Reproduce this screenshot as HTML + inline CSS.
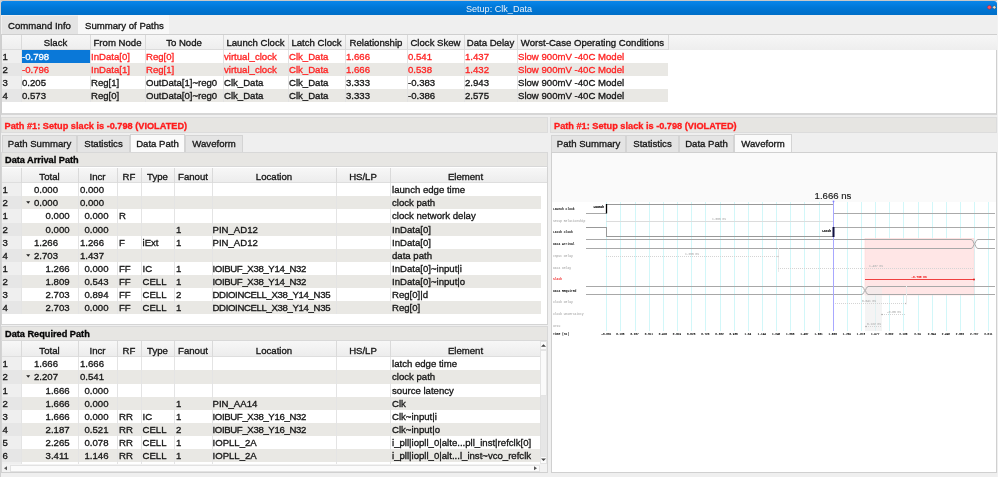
<!DOCTYPE html><html><head><meta charset="utf-8"><style>
*{margin:0;padding:0;box-sizing:border-box}
html,body{width:998px;height:477px;overflow:hidden;background:#eeeeee;font-family:"Liberation Sans",sans-serif;font-size:9.6px;color:#161616}
div{position:absolute}
.t{white-space:nowrap;-webkit-text-stroke:0.32px currentColor}
.b{font-weight:bold}
.r{color:#ff2424}
</style></head><body><div id="root" style="left:0;top:0;width:998px;height:477px;will-change:transform"><div style="left:0px;top:0px;width:998px;height:477px;background:#efefef"></div>
<div style="left:0px;top:0px;width:998px;height:1px;background:#c8c8c8"></div>
<div style="left:0px;top:0px;width:1px;height:477px;background:#d0d0d0"></div>
<div style="left:997px;top:0px;width:1px;height:477px;background:#f2f2f2"></div>
<div style="left:1px;top:1px;width:996px;height:14px;background:linear-gradient(#0a86ea,#0078d8 45%,#006fc8);border-radius:2px 3px 0 0"></div>
<div class="t" style="left:1px;top:1.5px;width:996px;text-align:center;height:14px;line-height:14px;color:#e8f0f8;font-size:9.1px;-webkit-text-stroke:0">Setup: Clk_Data</div>
<svg style="position:absolute;left:985px;top:3px" width="12" height="9" viewBox="985 3 12 9"><circle cx="989.4" cy="7.3" r="1.9" fill="#ff5060" stroke="#a02838" stroke-width="0.5"/><path d="M994.3 5.4L996.2 7.3L994.3 9.2L992.4 7.3Z" fill="#e8dcc8" stroke="#403828" stroke-width="0.35"/></svg>
<div style="left:1px;top:15px;width:996px;height:20px;background:#efefef"></div>
<div style="left:2px;top:16px;width:76px;height:18px;background:#e4e4e4"></div>
<div class="t" style="left:8px;top:17px;height:17px;line-height:17px;">Command Info</div>
<div style="left:78px;top:15px;width:91px;height:20px;background:#f8f8f8"></div>
<div class="t" style="left:85px;top:17px;height:17px;line-height:17px;">Summary of Paths</div>
<div style="left:1px;top:34px;width:996px;height:81px;background:#fff;border:1px solid #cfcfcf;border-bottom:2px solid #d6d6d6"></div>
<div style="left:2px;top:35px;width:995px;height:15px;background:linear-gradient(#f6f6f6,#eeeeee)"></div>
<div style="left:2px;top:49px;width:666px;height:1px;background:#dcdcdc"></div>
<div style="left:21px;top:35px;width:1px;height:15px;background:#dadada"></div>
<div class="t" style="left:21px;top:36px;width:69px;text-align:center;height:14px;line-height:14px;">Slack</div>
<div style="left:90px;top:35px;width:1px;height:15px;background:#dadada"></div>
<div class="t" style="left:90px;top:36px;width:55px;text-align:center;height:14px;line-height:14px;">From Node</div>
<div style="left:145px;top:35px;width:1px;height:15px;background:#dadada"></div>
<div class="t" style="left:145px;top:36px;width:78px;text-align:center;height:14px;line-height:14px;">To Node</div>
<div style="left:223px;top:35px;width:1px;height:15px;background:#dadada"></div>
<div class="t" style="left:223px;top:36px;width:65px;text-align:center;height:14px;line-height:14px;">Launch Clock</div>
<div style="left:288px;top:35px;width:1px;height:15px;background:#dadada"></div>
<div class="t" style="left:288px;top:36px;width:57px;text-align:center;height:14px;line-height:14px;">Latch Clock</div>
<div style="left:345px;top:35px;width:1px;height:15px;background:#dadada"></div>
<div class="t" style="left:345px;top:36px;width:62px;text-align:center;height:14px;line-height:14px;">Relationship</div>
<div style="left:407px;top:35px;width:1px;height:15px;background:#dadada"></div>
<div class="t" style="left:407px;top:36px;width:57px;text-align:center;height:14px;line-height:14px;">Clock Skew</div>
<div style="left:464px;top:35px;width:1px;height:15px;background:#dadada"></div>
<div class="t" style="left:464px;top:36px;width:53px;text-align:center;height:14px;line-height:14px;">Data Delay</div>
<div style="left:517px;top:35px;width:1px;height:15px;background:#dadada"></div>
<div class="t" style="left:517px;top:36px;width:151px;text-align:center;height:14px;line-height:14px;">Worst-Case Operating Conditions</div>
<div style="left:668px;top:35px;width:1px;height:15px;background:#dadada"></div>
<div style="left:2px;top:50px;width:666px;height:13px;background:#ffffff"></div>
<div style="left:2px;top:50px;width:19px;height:13px;background:#efefef"></div>
<div class="t" style="left:2.5px;top:50.0px;height:13px;line-height:13px;">1</div>
<div style="left:21px;top:50px;width:69px;height:13px;background:#0a78d8"></div>
<div class="t" style="left:22px;top:50.0px;height:13px;line-height:13px;color:#fff">-0.798</div>
<div class="t" style="left:91px;top:50.0px;height:13px;line-height:13px;color:#ff2424">InData[0]</div>
<div class="t" style="left:146px;top:50.0px;height:13px;line-height:13px;color:#ff2424">Reg[0]</div>
<div class="t" style="left:224px;top:50.0px;height:13px;line-height:13px;color:#ff2424">virtual_clock</div>
<div class="t" style="left:289px;top:50.0px;height:13px;line-height:13px;color:#ff2424">Clk_Data</div>
<div class="t" style="left:346px;top:50.0px;height:13px;line-height:13px;color:#ff2424">1.666</div>
<div class="t" style="left:408px;top:50.0px;height:13px;line-height:13px;color:#ff2424">0.541</div>
<div class="t" style="left:465px;top:50.0px;height:13px;line-height:13px;color:#ff2424">1.437</div>
<div class="t" style="left:518px;top:50.0px;height:13px;line-height:13px;color:#ff2424">Slow 900mV -40C Model</div>
<div style="left:21px;top:50px;width:1px;height:13px;background:#e2e2e2"></div>
<div style="left:90px;top:50px;width:1px;height:13px;background:#e2e2e2"></div>
<div style="left:145px;top:50px;width:1px;height:13px;background:#e2e2e2"></div>
<div style="left:223px;top:50px;width:1px;height:13px;background:#e2e2e2"></div>
<div style="left:288px;top:50px;width:1px;height:13px;background:#e2e2e2"></div>
<div style="left:345px;top:50px;width:1px;height:13px;background:#e2e2e2"></div>
<div style="left:407px;top:50px;width:1px;height:13px;background:#e2e2e2"></div>
<div style="left:464px;top:50px;width:1px;height:13px;background:#e2e2e2"></div>
<div style="left:517px;top:50px;width:1px;height:13px;background:#e2e2e2"></div>
<div style="left:2px;top:63px;width:666px;height:13px;background:#e9e8e4"></div>
<div style="left:2px;top:63px;width:19px;height:13px;background:#e6e6e6"></div>
<div class="t" style="left:2.5px;top:63.13px;height:13px;line-height:13px;">2</div>
<div class="t" style="left:22px;top:63.13px;height:13px;line-height:13px;color:#ff2424">-0.796</div>
<div class="t" style="left:91px;top:63.13px;height:13px;line-height:13px;color:#ff2424">InData[1]</div>
<div class="t" style="left:146px;top:63.13px;height:13px;line-height:13px;color:#ff2424">Reg[1]</div>
<div class="t" style="left:224px;top:63.13px;height:13px;line-height:13px;color:#ff2424">virtual_clock</div>
<div class="t" style="left:289px;top:63.13px;height:13px;line-height:13px;color:#ff2424">Clk_Data</div>
<div class="t" style="left:346px;top:63.13px;height:13px;line-height:13px;color:#ff2424">1.666</div>
<div class="t" style="left:408px;top:63.13px;height:13px;line-height:13px;color:#ff2424">0.538</div>
<div class="t" style="left:465px;top:63.13px;height:13px;line-height:13px;color:#ff2424">1.432</div>
<div class="t" style="left:518px;top:63.13px;height:13px;line-height:13px;color:#ff2424">Slow 900mV -40C Model</div>
<div style="left:21px;top:63px;width:1px;height:13px;background:#e2e2e2"></div>
<div style="left:90px;top:63px;width:1px;height:13px;background:#e2e2e2"></div>
<div style="left:145px;top:63px;width:1px;height:13px;background:#e2e2e2"></div>
<div style="left:223px;top:63px;width:1px;height:13px;background:#e2e2e2"></div>
<div style="left:288px;top:63px;width:1px;height:13px;background:#e2e2e2"></div>
<div style="left:345px;top:63px;width:1px;height:13px;background:#e2e2e2"></div>
<div style="left:407px;top:63px;width:1px;height:13px;background:#e2e2e2"></div>
<div style="left:464px;top:63px;width:1px;height:13px;background:#e2e2e2"></div>
<div style="left:517px;top:63px;width:1px;height:13px;background:#e2e2e2"></div>
<div style="left:2px;top:76px;width:666px;height:13px;background:#ffffff"></div>
<div style="left:2px;top:76px;width:19px;height:13px;background:#efefef"></div>
<div class="t" style="left:2.5px;top:76.26px;height:13px;line-height:13px;">3</div>
<div class="t" style="left:22px;top:76.26px;height:13px;line-height:13px;">0.205</div>
<div class="t" style="left:91px;top:76.26px;height:13px;line-height:13px;">Reg[1]</div>
<div class="t" style="left:146px;top:76.26px;height:13px;line-height:13px;">OutData[1]~reg0</div>
<div class="t" style="left:224px;top:76.26px;height:13px;line-height:13px;">Clk_Data</div>
<div class="t" style="left:289px;top:76.26px;height:13px;line-height:13px;">Clk_Data</div>
<div class="t" style="left:346px;top:76.26px;height:13px;line-height:13px;">3.333</div>
<div class="t" style="left:408px;top:76.26px;height:13px;line-height:13px;">-0.383</div>
<div class="t" style="left:465px;top:76.26px;height:13px;line-height:13px;">2.943</div>
<div class="t" style="left:518px;top:76.26px;height:13px;line-height:13px;">Slow 900mV -40C Model</div>
<div style="left:21px;top:76px;width:1px;height:13px;background:#e2e2e2"></div>
<div style="left:90px;top:76px;width:1px;height:13px;background:#e2e2e2"></div>
<div style="left:145px;top:76px;width:1px;height:13px;background:#e2e2e2"></div>
<div style="left:223px;top:76px;width:1px;height:13px;background:#e2e2e2"></div>
<div style="left:288px;top:76px;width:1px;height:13px;background:#e2e2e2"></div>
<div style="left:345px;top:76px;width:1px;height:13px;background:#e2e2e2"></div>
<div style="left:407px;top:76px;width:1px;height:13px;background:#e2e2e2"></div>
<div style="left:464px;top:76px;width:1px;height:13px;background:#e2e2e2"></div>
<div style="left:517px;top:76px;width:1px;height:13px;background:#e2e2e2"></div>
<div style="left:2px;top:89px;width:666px;height:13px;background:#e9e8e4"></div>
<div style="left:2px;top:89px;width:19px;height:13px;background:#e6e6e6"></div>
<div class="t" style="left:2.5px;top:89.39px;height:13px;line-height:13px;">4</div>
<div class="t" style="left:22px;top:89.39px;height:13px;line-height:13px;">0.573</div>
<div class="t" style="left:91px;top:89.39px;height:13px;line-height:13px;">Reg[0]</div>
<div class="t" style="left:146px;top:89.39px;height:13px;line-height:13px;">OutData[0]~reg0</div>
<div class="t" style="left:224px;top:89.39px;height:13px;line-height:13px;">Clk_Data</div>
<div class="t" style="left:289px;top:89.39px;height:13px;line-height:13px;">Clk_Data</div>
<div class="t" style="left:346px;top:89.39px;height:13px;line-height:13px;">3.333</div>
<div class="t" style="left:408px;top:89.39px;height:13px;line-height:13px;">-0.386</div>
<div class="t" style="left:465px;top:89.39px;height:13px;line-height:13px;">2.575</div>
<div class="t" style="left:518px;top:89.39px;height:13px;line-height:13px;">Slow 900mV -40C Model</div>
<div style="left:21px;top:89px;width:1px;height:13px;background:#e2e2e2"></div>
<div style="left:90px;top:89px;width:1px;height:13px;background:#e2e2e2"></div>
<div style="left:145px;top:89px;width:1px;height:13px;background:#e2e2e2"></div>
<div style="left:223px;top:89px;width:1px;height:13px;background:#e2e2e2"></div>
<div style="left:288px;top:89px;width:1px;height:13px;background:#e2e2e2"></div>
<div style="left:345px;top:89px;width:1px;height:13px;background:#e2e2e2"></div>
<div style="left:407px;top:89px;width:1px;height:13px;background:#e2e2e2"></div>
<div style="left:464px;top:89px;width:1px;height:13px;background:#e2e2e2"></div>
<div style="left:517px;top:89px;width:1px;height:13px;background:#e2e2e2"></div>
<div style="left:1px;top:117px;width:547px;height:356px;background:#efefef"></div>
<div style="left:1px;top:117px;width:547px;height:16px;background:#e6e5e2;border:1px solid #dcdcdc"></div>
<div class="t" style="left:4.5px;top:118.5px;height:15px;line-height:15px;font-weight:bold;color:#ff1c1c;font-size:9.2px">Path #1: Setup slack is -0.798 (VIOLATED)</div>
<div style="left:2px;top:135px;width:75px;height:17px;background:#e4e4e4;border:1px solid #d4d4d4;border-bottom:none"></div>
<div class="t" style="left:2px;top:135px;width:75px;text-align:center;height:17px;line-height:17px;">Path Summary</div>
<div style="left:77px;top:135px;width:53px;height:17px;background:#e4e4e4;border:1px solid #d4d4d4;border-bottom:none"></div>
<div class="t" style="left:77px;top:135px;width:53px;text-align:center;height:17px;line-height:17px;">Statistics</div>
<div style="left:130px;top:134px;width:55px;height:19px;background:#fafafa;border:1px solid #d4d4d4;border-bottom:none"></div>
<div class="t" style="left:130px;top:135px;width:55px;text-align:center;height:17px;line-height:17px;">Data Path</div>
<div style="left:185px;top:135px;width:58px;height:17px;background:#e4e4e4;border:1px solid #d4d4d4;border-bottom:none"></div>
<div class="t" style="left:185px;top:135px;width:58px;text-align:center;height:17px;line-height:17px;">Waveform</div>
<div style="left:1px;top:152px;width:547px;height:15px;background:#e7e6e3;border:1px solid #d8d8d8"></div>
<div class="t" style="left:5px;top:153px;height:15px;line-height:15px;font-weight:bold;font-size:9.2px;color:#050505">Data Arrival Path</div>
<div style="left:1px;top:167px;width:547px;height:158px;background:#fff;border:1px solid #d4d4d4;border-top:none"></div>
<div style="left:2px;top:168px;width:545px;height:156px;background:#fff"></div>
<div style="left:2px;top:168px;width:545px;height:15px;background:linear-gradient(#f7f7f7,#ececec)"></div>
<div style="left:2px;top:182px;width:545px;height:1px;background:#dedede"></div>
<div style="left:21px;top:168px;width:1px;height:15px;background:#dadada"></div>
<div class="t" style="left:21px;top:170px;width:57px;text-align:center;height:14px;line-height:14px;">Total</div>
<div style="left:78px;top:168px;width:1px;height:15px;background:#dadada"></div>
<div class="t" style="left:78px;top:170px;width:39px;text-align:center;height:14px;line-height:14px;">Incr</div>
<div style="left:117px;top:168px;width:1px;height:15px;background:#dadada"></div>
<div class="t" style="left:117px;top:170px;width:24px;text-align:center;height:14px;line-height:14px;">RF</div>
<div style="left:141px;top:168px;width:1px;height:15px;background:#dadada"></div>
<div class="t" style="left:141px;top:170px;width:33px;text-align:center;height:14px;line-height:14px;">Type</div>
<div style="left:174px;top:168px;width:1px;height:15px;background:#dadada"></div>
<div class="t" style="left:174px;top:170px;width:38px;text-align:center;height:14px;line-height:14px;">Fanout</div>
<div style="left:212px;top:168px;width:1px;height:15px;background:#dadada"></div>
<div class="t" style="left:212px;top:170px;width:124px;text-align:center;height:14px;line-height:14px;">Location</div>
<div style="left:336px;top:168px;width:1px;height:15px;background:#dadada"></div>
<div class="t" style="left:336px;top:170px;width:54px;text-align:center;height:14px;line-height:14px;">HS/LP</div>
<div style="left:390px;top:168px;width:1px;height:15px;background:#dadada"></div>
<div class="t" style="left:390px;top:170px;width:151px;text-align:center;height:14px;line-height:14px;">Element</div>
<div style="left:2px;top:183px;width:539px;height:13px;background:#ffffff"></div>
<div style="left:2px;top:183px;width:19px;height:13px;background:#efefef"></div>
<div class="t" style="left:2.5px;top:183.2px;height:13px;line-height:13px;">1</div>
<div class="t" style="left:34px;top:183.2px;height:13px;line-height:13px;">0.000</div>
<div class="t" style="left:80px;top:183.2px;height:13px;line-height:13px;">0.000</div>
<div class="t" style="left:119px;top:183.2px;height:13px;line-height:13px;"></div>
<div class="t" style="left:142.5px;top:183.2px;height:13px;line-height:13px;"></div>
<div class="t" style="left:176px;top:183.2px;height:13px;line-height:13px;"></div>
<div class="t" style="left:212.5px;top:183.2px;height:13px;line-height:13px;"></div>
<div class="t" style="left:392px;top:183.2px;height:13px;line-height:13px;">launch edge time</div>
<div style="left:21px;top:183px;width:1px;height:13px;background:#e4e4e4"></div>
<div style="left:78px;top:183px;width:1px;height:13px;background:#e4e4e4"></div>
<div style="left:117px;top:183px;width:1px;height:13px;background:#e4e4e4"></div>
<div style="left:141px;top:183px;width:1px;height:13px;background:#e4e4e4"></div>
<div style="left:174px;top:183px;width:1px;height:13px;background:#e4e4e4"></div>
<div style="left:212px;top:183px;width:1px;height:13px;background:#e4e4e4"></div>
<div style="left:336px;top:183px;width:1px;height:13px;background:#e4e4e4"></div>
<div style="left:390px;top:183px;width:1px;height:13px;background:#e4e4e4"></div>
<div style="left:2px;top:196px;width:539px;height:13px;background:#e9e8e4"></div>
<div style="left:2px;top:196px;width:19px;height:13px;background:#e6e6e6"></div>
<div class="t" style="left:2.5px;top:196.32999999999998px;height:13px;line-height:13px;">2</div>
<svg style="position:absolute;left:26px;top:201px" width="5" height="3"><path d="M0.2 0.3H4.2L2.2 2.8Z" fill="#222"/></svg>
<div class="t" style="left:34px;top:196.32999999999998px;height:13px;line-height:13px;">0.000</div>
<div class="t" style="left:80px;top:196.32999999999998px;height:13px;line-height:13px;">0.000</div>
<div class="t" style="left:119px;top:196.32999999999998px;height:13px;line-height:13px;"></div>
<div class="t" style="left:142.5px;top:196.32999999999998px;height:13px;line-height:13px;"></div>
<div class="t" style="left:176px;top:196.32999999999998px;height:13px;line-height:13px;"></div>
<div class="t" style="left:212.5px;top:196.32999999999998px;height:13px;line-height:13px;"></div>
<div class="t" style="left:392px;top:196.32999999999998px;height:13px;line-height:13px;">clock path</div>
<div style="left:21px;top:196px;width:1px;height:13px;background:#e4e4e4"></div>
<div style="left:78px;top:196px;width:1px;height:13px;background:#e4e4e4"></div>
<div style="left:117px;top:196px;width:1px;height:13px;background:#e4e4e4"></div>
<div style="left:141px;top:196px;width:1px;height:13px;background:#e4e4e4"></div>
<div style="left:174px;top:196px;width:1px;height:13px;background:#e4e4e4"></div>
<div style="left:212px;top:196px;width:1px;height:13px;background:#e4e4e4"></div>
<div style="left:336px;top:196px;width:1px;height:13px;background:#e4e4e4"></div>
<div style="left:390px;top:196px;width:1px;height:13px;background:#e4e4e4"></div>
<div style="left:2px;top:209px;width:539px;height:14px;background:#ffffff"></div>
<div style="left:2px;top:209px;width:19px;height:14px;background:#efefef"></div>
<div class="t" style="left:2.5px;top:209.45999999999998px;height:13px;line-height:13px;">1</div>
<div class="t" style="left:45.6px;top:209.45999999999998px;height:13px;line-height:13px;">0.000</div>
<div class="t" style="left:84.5px;top:209.45999999999998px;height:13px;line-height:13px;">0.000</div>
<div class="t" style="left:119px;top:209.45999999999998px;height:13px;line-height:13px;">R</div>
<div class="t" style="left:142.5px;top:209.45999999999998px;height:13px;line-height:13px;"></div>
<div class="t" style="left:176px;top:209.45999999999998px;height:13px;line-height:13px;"></div>
<div class="t" style="left:212.5px;top:209.45999999999998px;height:13px;line-height:13px;"></div>
<div class="t" style="left:392px;top:209.45999999999998px;height:13px;line-height:13px;">clock network delay</div>
<div style="left:21px;top:209px;width:1px;height:14px;background:#e4e4e4"></div>
<div style="left:78px;top:209px;width:1px;height:14px;background:#e4e4e4"></div>
<div style="left:117px;top:209px;width:1px;height:14px;background:#e4e4e4"></div>
<div style="left:141px;top:209px;width:1px;height:14px;background:#e4e4e4"></div>
<div style="left:174px;top:209px;width:1px;height:14px;background:#e4e4e4"></div>
<div style="left:212px;top:209px;width:1px;height:14px;background:#e4e4e4"></div>
<div style="left:336px;top:209px;width:1px;height:14px;background:#e4e4e4"></div>
<div style="left:390px;top:209px;width:1px;height:14px;background:#e4e4e4"></div>
<div style="left:2px;top:223px;width:539px;height:13px;background:#e9e8e4"></div>
<div style="left:2px;top:223px;width:19px;height:13px;background:#e6e6e6"></div>
<div class="t" style="left:2.5px;top:222.58999999999997px;height:13px;line-height:13px;">2</div>
<div class="t" style="left:45.6px;top:222.58999999999997px;height:13px;line-height:13px;">0.000</div>
<div class="t" style="left:84.5px;top:222.58999999999997px;height:13px;line-height:13px;">0.000</div>
<div class="t" style="left:119px;top:222.58999999999997px;height:13px;line-height:13px;"></div>
<div class="t" style="left:142.5px;top:222.58999999999997px;height:13px;line-height:13px;"></div>
<div class="t" style="left:176px;top:222.58999999999997px;height:13px;line-height:13px;">1</div>
<div class="t" style="left:212.5px;top:222.58999999999997px;height:13px;line-height:13px;">PIN_AD12</div>
<div class="t" style="left:392px;top:222.58999999999997px;height:13px;line-height:13px;">InData[0]</div>
<div style="left:21px;top:223px;width:1px;height:13px;background:#e4e4e4"></div>
<div style="left:78px;top:223px;width:1px;height:13px;background:#e4e4e4"></div>
<div style="left:117px;top:223px;width:1px;height:13px;background:#e4e4e4"></div>
<div style="left:141px;top:223px;width:1px;height:13px;background:#e4e4e4"></div>
<div style="left:174px;top:223px;width:1px;height:13px;background:#e4e4e4"></div>
<div style="left:212px;top:223px;width:1px;height:13px;background:#e4e4e4"></div>
<div style="left:336px;top:223px;width:1px;height:13px;background:#e4e4e4"></div>
<div style="left:390px;top:223px;width:1px;height:13px;background:#e4e4e4"></div>
<div style="left:2px;top:236px;width:539px;height:13px;background:#ffffff"></div>
<div style="left:2px;top:236px;width:19px;height:13px;background:#efefef"></div>
<div class="t" style="left:2.5px;top:235.72px;height:13px;line-height:13px;">3</div>
<div class="t" style="left:34px;top:235.72px;height:13px;line-height:13px;">1.266</div>
<div class="t" style="left:80px;top:235.72px;height:13px;line-height:13px;">1.266</div>
<div class="t" style="left:119px;top:235.72px;height:13px;line-height:13px;">F</div>
<div class="t" style="left:142.5px;top:235.72px;height:13px;line-height:13px;">iExt</div>
<div class="t" style="left:176px;top:235.72px;height:13px;line-height:13px;">1</div>
<div class="t" style="left:212.5px;top:235.72px;height:13px;line-height:13px;">PIN_AD12</div>
<div class="t" style="left:392px;top:235.72px;height:13px;line-height:13px;">InData[0]</div>
<div style="left:21px;top:236px;width:1px;height:13px;background:#e4e4e4"></div>
<div style="left:78px;top:236px;width:1px;height:13px;background:#e4e4e4"></div>
<div style="left:117px;top:236px;width:1px;height:13px;background:#e4e4e4"></div>
<div style="left:141px;top:236px;width:1px;height:13px;background:#e4e4e4"></div>
<div style="left:174px;top:236px;width:1px;height:13px;background:#e4e4e4"></div>
<div style="left:212px;top:236px;width:1px;height:13px;background:#e4e4e4"></div>
<div style="left:336px;top:236px;width:1px;height:13px;background:#e4e4e4"></div>
<div style="left:390px;top:236px;width:1px;height:13px;background:#e4e4e4"></div>
<div style="left:2px;top:249px;width:539px;height:13px;background:#e9e8e4"></div>
<div style="left:2px;top:249px;width:19px;height:13px;background:#e6e6e6"></div>
<div class="t" style="left:2.5px;top:248.85px;height:13px;line-height:13px;">4</div>
<svg style="position:absolute;left:26px;top:254px" width="5" height="3"><path d="M0.2 0.3H4.2L2.2 2.8Z" fill="#222"/></svg>
<div class="t" style="left:34px;top:248.85px;height:13px;line-height:13px;">2.703</div>
<div class="t" style="left:80px;top:248.85px;height:13px;line-height:13px;">1.437</div>
<div class="t" style="left:119px;top:248.85px;height:13px;line-height:13px;"></div>
<div class="t" style="left:142.5px;top:248.85px;height:13px;line-height:13px;"></div>
<div class="t" style="left:176px;top:248.85px;height:13px;line-height:13px;"></div>
<div class="t" style="left:212.5px;top:248.85px;height:13px;line-height:13px;"></div>
<div class="t" style="left:392px;top:248.85px;height:13px;line-height:13px;">data path</div>
<div style="left:21px;top:249px;width:1px;height:13px;background:#e4e4e4"></div>
<div style="left:78px;top:249px;width:1px;height:13px;background:#e4e4e4"></div>
<div style="left:117px;top:249px;width:1px;height:13px;background:#e4e4e4"></div>
<div style="left:141px;top:249px;width:1px;height:13px;background:#e4e4e4"></div>
<div style="left:174px;top:249px;width:1px;height:13px;background:#e4e4e4"></div>
<div style="left:212px;top:249px;width:1px;height:13px;background:#e4e4e4"></div>
<div style="left:336px;top:249px;width:1px;height:13px;background:#e4e4e4"></div>
<div style="left:390px;top:249px;width:1px;height:13px;background:#e4e4e4"></div>
<div style="left:2px;top:262px;width:539px;height:13px;background:#ffffff"></div>
<div style="left:2px;top:262px;width:19px;height:13px;background:#efefef"></div>
<div class="t" style="left:2.5px;top:261.98px;height:13px;line-height:13px;">1</div>
<div class="t" style="left:45.6px;top:261.98px;height:13px;line-height:13px;">1.266</div>
<div class="t" style="left:84.5px;top:261.98px;height:13px;line-height:13px;">0.000</div>
<div class="t" style="left:119px;top:261.98px;height:13px;line-height:13px;">FF</div>
<div class="t" style="left:142.5px;top:261.98px;height:13px;line-height:13px;">IC</div>
<div class="t" style="left:176px;top:261.98px;height:13px;line-height:13px;">1</div>
<div class="t" style="left:212.5px;top:261.98px;height:13px;line-height:13px;letter-spacing:-0.35px">IOIBUF_X38_Y14_N32</div>
<div class="t" style="left:392px;top:261.98px;height:13px;line-height:13px;">InData[0]~input|i</div>
<div style="left:21px;top:262px;width:1px;height:13px;background:#e4e4e4"></div>
<div style="left:78px;top:262px;width:1px;height:13px;background:#e4e4e4"></div>
<div style="left:117px;top:262px;width:1px;height:13px;background:#e4e4e4"></div>
<div style="left:141px;top:262px;width:1px;height:13px;background:#e4e4e4"></div>
<div style="left:174px;top:262px;width:1px;height:13px;background:#e4e4e4"></div>
<div style="left:212px;top:262px;width:1px;height:13px;background:#e4e4e4"></div>
<div style="left:336px;top:262px;width:1px;height:13px;background:#e4e4e4"></div>
<div style="left:390px;top:262px;width:1px;height:13px;background:#e4e4e4"></div>
<div style="left:2px;top:275px;width:539px;height:13px;background:#e9e8e4"></div>
<div style="left:2px;top:275px;width:19px;height:13px;background:#e6e6e6"></div>
<div class="t" style="left:2.5px;top:275.11px;height:13px;line-height:13px;">2</div>
<div class="t" style="left:45.6px;top:275.11px;height:13px;line-height:13px;">1.809</div>
<div class="t" style="left:84.5px;top:275.11px;height:13px;line-height:13px;">0.543</div>
<div class="t" style="left:119px;top:275.11px;height:13px;line-height:13px;">FF</div>
<div class="t" style="left:142.5px;top:275.11px;height:13px;line-height:13px;">CELL</div>
<div class="t" style="left:176px;top:275.11px;height:13px;line-height:13px;">1</div>
<div class="t" style="left:212.5px;top:275.11px;height:13px;line-height:13px;letter-spacing:-0.35px">IOIBUF_X38_Y14_N32</div>
<div class="t" style="left:392px;top:275.11px;height:13px;line-height:13px;">InData[0]~input|o</div>
<div style="left:21px;top:275px;width:1px;height:13px;background:#e4e4e4"></div>
<div style="left:78px;top:275px;width:1px;height:13px;background:#e4e4e4"></div>
<div style="left:117px;top:275px;width:1px;height:13px;background:#e4e4e4"></div>
<div style="left:141px;top:275px;width:1px;height:13px;background:#e4e4e4"></div>
<div style="left:174px;top:275px;width:1px;height:13px;background:#e4e4e4"></div>
<div style="left:212px;top:275px;width:1px;height:13px;background:#e4e4e4"></div>
<div style="left:336px;top:275px;width:1px;height:13px;background:#e4e4e4"></div>
<div style="left:390px;top:275px;width:1px;height:13px;background:#e4e4e4"></div>
<div style="left:2px;top:288px;width:539px;height:13px;background:#ffffff"></div>
<div style="left:2px;top:288px;width:19px;height:13px;background:#efefef"></div>
<div class="t" style="left:2.5px;top:288.24px;height:13px;line-height:13px;">3</div>
<div class="t" style="left:45.6px;top:288.24px;height:13px;line-height:13px;">2.703</div>
<div class="t" style="left:84.5px;top:288.24px;height:13px;line-height:13px;">0.894</div>
<div class="t" style="left:119px;top:288.24px;height:13px;line-height:13px;">FF</div>
<div class="t" style="left:142.5px;top:288.24px;height:13px;line-height:13px;">CELL</div>
<div class="t" style="left:176px;top:288.24px;height:13px;line-height:13px;">2</div>
<div class="t" style="left:212.5px;top:288.24px;height:13px;line-height:13px;letter-spacing:-0.35px">DDIOINCELL_X38_Y14_N35</div>
<div class="t" style="left:392px;top:288.24px;height:13px;line-height:13px;">Reg[0]|d</div>
<div style="left:21px;top:288px;width:1px;height:13px;background:#e4e4e4"></div>
<div style="left:78px;top:288px;width:1px;height:13px;background:#e4e4e4"></div>
<div style="left:117px;top:288px;width:1px;height:13px;background:#e4e4e4"></div>
<div style="left:141px;top:288px;width:1px;height:13px;background:#e4e4e4"></div>
<div style="left:174px;top:288px;width:1px;height:13px;background:#e4e4e4"></div>
<div style="left:212px;top:288px;width:1px;height:13px;background:#e4e4e4"></div>
<div style="left:336px;top:288px;width:1px;height:13px;background:#e4e4e4"></div>
<div style="left:390px;top:288px;width:1px;height:13px;background:#e4e4e4"></div>
<div style="left:2px;top:301px;width:539px;height:13px;background:#e9e8e4"></div>
<div style="left:2px;top:301px;width:19px;height:13px;background:#e6e6e6"></div>
<div class="t" style="left:2.5px;top:301.37px;height:13px;line-height:13px;">4</div>
<div class="t" style="left:45.6px;top:301.37px;height:13px;line-height:13px;">2.703</div>
<div class="t" style="left:84.5px;top:301.37px;height:13px;line-height:13px;">0.000</div>
<div class="t" style="left:119px;top:301.37px;height:13px;line-height:13px;">FF</div>
<div class="t" style="left:142.5px;top:301.37px;height:13px;line-height:13px;">CELL</div>
<div class="t" style="left:176px;top:301.37px;height:13px;line-height:13px;">1</div>
<div class="t" style="left:212.5px;top:301.37px;height:13px;line-height:13px;letter-spacing:-0.35px">DDIOINCELL_X38_Y14_N35</div>
<div class="t" style="left:392px;top:301.37px;height:13px;line-height:13px;">Reg[0]</div>
<div style="left:21px;top:301px;width:1px;height:13px;background:#e4e4e4"></div>
<div style="left:78px;top:301px;width:1px;height:13px;background:#e4e4e4"></div>
<div style="left:117px;top:301px;width:1px;height:13px;background:#e4e4e4"></div>
<div style="left:141px;top:301px;width:1px;height:13px;background:#e4e4e4"></div>
<div style="left:174px;top:301px;width:1px;height:13px;background:#e4e4e4"></div>
<div style="left:212px;top:301px;width:1px;height:13px;background:#e4e4e4"></div>
<div style="left:336px;top:301px;width:1px;height:13px;background:#e4e4e4"></div>
<div style="left:390px;top:301px;width:1px;height:13px;background:#e4e4e4"></div>
<div style="left:1px;top:326px;width:547px;height:15px;background:#e7e6e3;border:1px solid #d8d8d8"></div>
<div class="t" style="left:5px;top:327px;height:15px;line-height:15px;font-weight:bold;font-size:9.2px;color:#050505">Data Required Path</div>
<div style="left:1px;top:341px;width:547px;height:132px;background:#fff;border:1px solid #d4d4d4;border-top:none"></div>
<div style="left:2px;top:341px;width:545px;height:123px;background:#fff"></div>
<div style="left:2px;top:341px;width:545px;height:16px;background:linear-gradient(#f7f7f7,#ececec)"></div>
<div style="left:2px;top:356px;width:545px;height:1px;background:#dedede"></div>
<div style="left:21px;top:341px;width:1px;height:16px;background:#dadada"></div>
<div class="t" style="left:21px;top:343px;width:57px;text-align:center;height:15px;line-height:15px;">Total</div>
<div style="left:78px;top:341px;width:1px;height:16px;background:#dadada"></div>
<div class="t" style="left:78px;top:343px;width:39px;text-align:center;height:15px;line-height:15px;">Incr</div>
<div style="left:117px;top:341px;width:1px;height:16px;background:#dadada"></div>
<div class="t" style="left:117px;top:343px;width:24px;text-align:center;height:15px;line-height:15px;">RF</div>
<div style="left:141px;top:341px;width:1px;height:16px;background:#dadada"></div>
<div class="t" style="left:141px;top:343px;width:33px;text-align:center;height:15px;line-height:15px;">Type</div>
<div style="left:174px;top:341px;width:1px;height:16px;background:#dadada"></div>
<div class="t" style="left:174px;top:343px;width:38px;text-align:center;height:15px;line-height:15px;">Fanout</div>
<div style="left:212px;top:341px;width:1px;height:16px;background:#dadada"></div>
<div class="t" style="left:212px;top:343px;width:124px;text-align:center;height:15px;line-height:15px;">Location</div>
<div style="left:336px;top:341px;width:1px;height:16px;background:#dadada"></div>
<div class="t" style="left:336px;top:343px;width:54px;text-align:center;height:15px;line-height:15px;">HS/LP</div>
<div style="left:390px;top:341px;width:1px;height:16px;background:#dadada"></div>
<div class="t" style="left:390px;top:343px;width:151px;text-align:center;height:15px;line-height:15px;">Element</div>
<div style="left:2px;top:357px;width:538px;height:13px;background:#ffffff"></div>
<div style="left:2px;top:357px;width:19px;height:13px;background:#efefef"></div>
<div class="t" style="left:2.5px;top:357.35px;height:13px;line-height:13px;">1</div>
<div class="t" style="left:34px;top:357.35px;height:13px;line-height:13px;">1.666</div>
<div class="t" style="left:80px;top:357.35px;height:13px;line-height:13px;">1.666</div>
<div class="t" style="left:119px;top:357.35px;height:13px;line-height:13px;"></div>
<div class="t" style="left:142.5px;top:357.35px;height:13px;line-height:13px;"></div>
<div class="t" style="left:176px;top:357.35px;height:13px;line-height:13px;"></div>
<div class="t" style="left:212.5px;top:357.35px;height:13px;line-height:13px;"></div>
<div class="t" style="left:392px;top:357.35px;height:13px;line-height:13px;">latch edge time</div>
<div style="left:21px;top:357px;width:1px;height:13px;background:#e4e4e4"></div>
<div style="left:78px;top:357px;width:1px;height:13px;background:#e4e4e4"></div>
<div style="left:117px;top:357px;width:1px;height:13px;background:#e4e4e4"></div>
<div style="left:141px;top:357px;width:1px;height:13px;background:#e4e4e4"></div>
<div style="left:174px;top:357px;width:1px;height:13px;background:#e4e4e4"></div>
<div style="left:212px;top:357px;width:1px;height:13px;background:#e4e4e4"></div>
<div style="left:336px;top:357px;width:1px;height:13px;background:#e4e4e4"></div>
<div style="left:390px;top:357px;width:1px;height:13px;background:#e4e4e4"></div>
<div style="left:2px;top:370px;width:538px;height:14px;background:#e9e8e4"></div>
<div style="left:2px;top:370px;width:19px;height:14px;background:#e6e6e6"></div>
<div class="t" style="left:2.5px;top:370.48px;height:13px;line-height:13px;">2</div>
<svg style="position:absolute;left:26px;top:375px" width="5" height="3"><path d="M0.2 0.3H4.2L2.2 2.8Z" fill="#222"/></svg>
<div class="t" style="left:34px;top:370.48px;height:13px;line-height:13px;">2.207</div>
<div class="t" style="left:80px;top:370.48px;height:13px;line-height:13px;">0.541</div>
<div class="t" style="left:119px;top:370.48px;height:13px;line-height:13px;"></div>
<div class="t" style="left:142.5px;top:370.48px;height:13px;line-height:13px;"></div>
<div class="t" style="left:176px;top:370.48px;height:13px;line-height:13px;"></div>
<div class="t" style="left:212.5px;top:370.48px;height:13px;line-height:13px;"></div>
<div class="t" style="left:392px;top:370.48px;height:13px;line-height:13px;">clock path</div>
<div style="left:21px;top:370px;width:1px;height:14px;background:#e4e4e4"></div>
<div style="left:78px;top:370px;width:1px;height:14px;background:#e4e4e4"></div>
<div style="left:117px;top:370px;width:1px;height:14px;background:#e4e4e4"></div>
<div style="left:141px;top:370px;width:1px;height:14px;background:#e4e4e4"></div>
<div style="left:174px;top:370px;width:1px;height:14px;background:#e4e4e4"></div>
<div style="left:212px;top:370px;width:1px;height:14px;background:#e4e4e4"></div>
<div style="left:336px;top:370px;width:1px;height:14px;background:#e4e4e4"></div>
<div style="left:390px;top:370px;width:1px;height:14px;background:#e4e4e4"></div>
<div style="left:2px;top:384px;width:538px;height:13px;background:#ffffff"></div>
<div style="left:2px;top:384px;width:19px;height:13px;background:#efefef"></div>
<div class="t" style="left:2.5px;top:383.61px;height:13px;line-height:13px;">1</div>
<div class="t" style="left:45.6px;top:383.61px;height:13px;line-height:13px;">1.666</div>
<div class="t" style="left:84.5px;top:383.61px;height:13px;line-height:13px;">0.000</div>
<div class="t" style="left:119px;top:383.61px;height:13px;line-height:13px;"></div>
<div class="t" style="left:142.5px;top:383.61px;height:13px;line-height:13px;"></div>
<div class="t" style="left:176px;top:383.61px;height:13px;line-height:13px;"></div>
<div class="t" style="left:212.5px;top:383.61px;height:13px;line-height:13px;"></div>
<div class="t" style="left:392px;top:383.61px;height:13px;line-height:13px;">source latency</div>
<div style="left:21px;top:384px;width:1px;height:13px;background:#e4e4e4"></div>
<div style="left:78px;top:384px;width:1px;height:13px;background:#e4e4e4"></div>
<div style="left:117px;top:384px;width:1px;height:13px;background:#e4e4e4"></div>
<div style="left:141px;top:384px;width:1px;height:13px;background:#e4e4e4"></div>
<div style="left:174px;top:384px;width:1px;height:13px;background:#e4e4e4"></div>
<div style="left:212px;top:384px;width:1px;height:13px;background:#e4e4e4"></div>
<div style="left:336px;top:384px;width:1px;height:13px;background:#e4e4e4"></div>
<div style="left:390px;top:384px;width:1px;height:13px;background:#e4e4e4"></div>
<div style="left:2px;top:397px;width:538px;height:13px;background:#e9e8e4"></div>
<div style="left:2px;top:397px;width:19px;height:13px;background:#e6e6e6"></div>
<div class="t" style="left:2.5px;top:396.74px;height:13px;line-height:13px;">2</div>
<div class="t" style="left:45.6px;top:396.74px;height:13px;line-height:13px;">1.666</div>
<div class="t" style="left:84.5px;top:396.74px;height:13px;line-height:13px;">0.000</div>
<div class="t" style="left:119px;top:396.74px;height:13px;line-height:13px;"></div>
<div class="t" style="left:142.5px;top:396.74px;height:13px;line-height:13px;"></div>
<div class="t" style="left:176px;top:396.74px;height:13px;line-height:13px;">1</div>
<div class="t" style="left:212.5px;top:396.74px;height:13px;line-height:13px;">PIN_AA14</div>
<div class="t" style="left:392px;top:396.74px;height:13px;line-height:13px;">Clk</div>
<div style="left:21px;top:397px;width:1px;height:13px;background:#e4e4e4"></div>
<div style="left:78px;top:397px;width:1px;height:13px;background:#e4e4e4"></div>
<div style="left:117px;top:397px;width:1px;height:13px;background:#e4e4e4"></div>
<div style="left:141px;top:397px;width:1px;height:13px;background:#e4e4e4"></div>
<div style="left:174px;top:397px;width:1px;height:13px;background:#e4e4e4"></div>
<div style="left:212px;top:397px;width:1px;height:13px;background:#e4e4e4"></div>
<div style="left:336px;top:397px;width:1px;height:13px;background:#e4e4e4"></div>
<div style="left:390px;top:397px;width:1px;height:13px;background:#e4e4e4"></div>
<div style="left:2px;top:410px;width:538px;height:13px;background:#ffffff"></div>
<div style="left:2px;top:410px;width:19px;height:13px;background:#efefef"></div>
<div class="t" style="left:2.5px;top:409.87px;height:13px;line-height:13px;">3</div>
<div class="t" style="left:45.6px;top:409.87px;height:13px;line-height:13px;">1.666</div>
<div class="t" style="left:84.5px;top:409.87px;height:13px;line-height:13px;">0.000</div>
<div class="t" style="left:119px;top:409.87px;height:13px;line-height:13px;">RR</div>
<div class="t" style="left:142.5px;top:409.87px;height:13px;line-height:13px;">IC</div>
<div class="t" style="left:176px;top:409.87px;height:13px;line-height:13px;">1</div>
<div class="t" style="left:212.5px;top:409.87px;height:13px;line-height:13px;letter-spacing:-0.35px">IOIBUF_X38_Y16_N32</div>
<div class="t" style="left:392px;top:409.87px;height:13px;line-height:13px;">Clk~input|i</div>
<div style="left:21px;top:410px;width:1px;height:13px;background:#e4e4e4"></div>
<div style="left:78px;top:410px;width:1px;height:13px;background:#e4e4e4"></div>
<div style="left:117px;top:410px;width:1px;height:13px;background:#e4e4e4"></div>
<div style="left:141px;top:410px;width:1px;height:13px;background:#e4e4e4"></div>
<div style="left:174px;top:410px;width:1px;height:13px;background:#e4e4e4"></div>
<div style="left:212px;top:410px;width:1px;height:13px;background:#e4e4e4"></div>
<div style="left:336px;top:410px;width:1px;height:13px;background:#e4e4e4"></div>
<div style="left:390px;top:410px;width:1px;height:13px;background:#e4e4e4"></div>
<div style="left:2px;top:423px;width:538px;height:13px;background:#e9e8e4"></div>
<div style="left:2px;top:423px;width:19px;height:13px;background:#e6e6e6"></div>
<div class="t" style="left:2.5px;top:423.0px;height:13px;line-height:13px;">4</div>
<div class="t" style="left:45.6px;top:423.0px;height:13px;line-height:13px;">2.187</div>
<div class="t" style="left:84.5px;top:423.0px;height:13px;line-height:13px;">0.521</div>
<div class="t" style="left:119px;top:423.0px;height:13px;line-height:13px;">RR</div>
<div class="t" style="left:142.5px;top:423.0px;height:13px;line-height:13px;">CELL</div>
<div class="t" style="left:176px;top:423.0px;height:13px;line-height:13px;">2</div>
<div class="t" style="left:212.5px;top:423.0px;height:13px;line-height:13px;letter-spacing:-0.35px">IOIBUF_X38_Y16_N32</div>
<div class="t" style="left:392px;top:423.0px;height:13px;line-height:13px;">Clk~input|o</div>
<div style="left:21px;top:423px;width:1px;height:13px;background:#e4e4e4"></div>
<div style="left:78px;top:423px;width:1px;height:13px;background:#e4e4e4"></div>
<div style="left:117px;top:423px;width:1px;height:13px;background:#e4e4e4"></div>
<div style="left:141px;top:423px;width:1px;height:13px;background:#e4e4e4"></div>
<div style="left:174px;top:423px;width:1px;height:13px;background:#e4e4e4"></div>
<div style="left:212px;top:423px;width:1px;height:13px;background:#e4e4e4"></div>
<div style="left:336px;top:423px;width:1px;height:13px;background:#e4e4e4"></div>
<div style="left:390px;top:423px;width:1px;height:13px;background:#e4e4e4"></div>
<div style="left:2px;top:436px;width:538px;height:13px;background:#ffffff"></div>
<div style="left:2px;top:436px;width:19px;height:13px;background:#efefef"></div>
<div class="t" style="left:2.5px;top:436.13px;height:13px;line-height:13px;">5</div>
<div class="t" style="left:45.6px;top:436.13px;height:13px;line-height:13px;">2.265</div>
<div class="t" style="left:84.5px;top:436.13px;height:13px;line-height:13px;">0.078</div>
<div class="t" style="left:119px;top:436.13px;height:13px;line-height:13px;">RR</div>
<div class="t" style="left:142.5px;top:436.13px;height:13px;line-height:13px;">CELL</div>
<div class="t" style="left:176px;top:436.13px;height:13px;line-height:13px;">1</div>
<div class="t" style="left:212.5px;top:436.13px;height:13px;line-height:13px;">IOPLL_2A</div>
<div class="t" style="left:392px;top:436.13px;height:13px;line-height:13px;">i_pll|iopll_0|alte...pll_inst|refclk[0]</div>
<div style="left:21px;top:436px;width:1px;height:13px;background:#e4e4e4"></div>
<div style="left:78px;top:436px;width:1px;height:13px;background:#e4e4e4"></div>
<div style="left:117px;top:436px;width:1px;height:13px;background:#e4e4e4"></div>
<div style="left:141px;top:436px;width:1px;height:13px;background:#e4e4e4"></div>
<div style="left:174px;top:436px;width:1px;height:13px;background:#e4e4e4"></div>
<div style="left:212px;top:436px;width:1px;height:13px;background:#e4e4e4"></div>
<div style="left:336px;top:436px;width:1px;height:13px;background:#e4e4e4"></div>
<div style="left:390px;top:436px;width:1px;height:13px;background:#e4e4e4"></div>
<div style="left:2px;top:449px;width:538px;height:13px;background:#e9e8e4"></div>
<div style="left:2px;top:449px;width:19px;height:13px;background:#e6e6e6"></div>
<div class="t" style="left:2.5px;top:449.26000000000005px;height:13px;line-height:13px;">6</div>
<div class="t" style="left:45.6px;top:449.26000000000005px;height:13px;line-height:13px;">3.411</div>
<div class="t" style="left:84.5px;top:449.26000000000005px;height:13px;line-height:13px;">1.146</div>
<div class="t" style="left:119px;top:449.26000000000005px;height:13px;line-height:13px;">RR</div>
<div class="t" style="left:142.5px;top:449.26000000000005px;height:13px;line-height:13px;">CELL</div>
<div class="t" style="left:176px;top:449.26000000000005px;height:13px;line-height:13px;">1</div>
<div class="t" style="left:212.5px;top:449.26000000000005px;height:13px;line-height:13px;">IOPLL_2A</div>
<div class="t" style="left:392px;top:449.26000000000005px;height:13px;line-height:13px;">i_pll|iopll_0|alt...l_inst~vco_refclk</div>
<div style="left:21px;top:449px;width:1px;height:13px;background:#e4e4e4"></div>
<div style="left:78px;top:449px;width:1px;height:13px;background:#e4e4e4"></div>
<div style="left:117px;top:449px;width:1px;height:13px;background:#e4e4e4"></div>
<div style="left:141px;top:449px;width:1px;height:13px;background:#e4e4e4"></div>
<div style="left:174px;top:449px;width:1px;height:13px;background:#e4e4e4"></div>
<div style="left:212px;top:449px;width:1px;height:13px;background:#e4e4e4"></div>
<div style="left:336px;top:449px;width:1px;height:13px;background:#e4e4e4"></div>
<div style="left:390px;top:449px;width:1px;height:13px;background:#e4e4e4"></div>
<div style="left:2px;top:462px;width:538px;height:2px;background:#ffffff"></div>
<div style="left:2px;top:462px;width:19px;height:2px;background:#efefef"></div>
<div class="t" style="left:2.5px;top:462.39000000000004px;height:13px;line-height:13px;">7</div>
<div class="t" style="left:45.6px;top:462.39000000000004px;height:13px;line-height:13px;"></div>
<div class="t" style="left:84.5px;top:462.39000000000004px;height:13px;line-height:13px;"></div>
<div class="t" style="left:119px;top:462.39000000000004px;height:13px;line-height:13px;"></div>
<div class="t" style="left:142.5px;top:462.39000000000004px;height:13px;line-height:13px;"></div>
<div class="t" style="left:176px;top:462.39000000000004px;height:13px;line-height:13px;"></div>
<div class="t" style="left:212.5px;top:462.39000000000004px;height:13px;line-height:13px;"></div>
<div class="t" style="left:392px;top:462.39000000000004px;height:13px;line-height:13px;"></div>
<div style="left:21px;top:462px;width:1px;height:2px;background:#e4e4e4"></div>
<div style="left:78px;top:462px;width:1px;height:2px;background:#e4e4e4"></div>
<div style="left:117px;top:462px;width:1px;height:2px;background:#e4e4e4"></div>
<div style="left:141px;top:462px;width:1px;height:2px;background:#e4e4e4"></div>
<div style="left:174px;top:462px;width:1px;height:2px;background:#e4e4e4"></div>
<div style="left:212px;top:462px;width:1px;height:2px;background:#e4e4e4"></div>
<div style="left:336px;top:462px;width:1px;height:2px;background:#e4e4e4"></div>
<div style="left:390px;top:462px;width:1px;height:2px;background:#e4e4e4"></div>
<div style="left:1px;top:464px;width:547px;height:9px;background:#f2f2f2;border-bottom:1px solid #d0d0d0;border-left:1px solid #d4d4d4;border-right:1px solid #d4d4d4"></div>
<div style="left:10px;top:465px;width:530px;height:7px;background:#fbfbfb;border:1px solid #e2e2e2"></div>
<div style="left:540px;top:349px;width:7px;height:115px;background:#e6e6e6;border-left:1px solid #e0e0e0"></div>
<div style="left:540px;top:350px;width:7px;height:46px;background:#fafafa;border:1px solid #e4e4e4"></div>
<div style="left:540px;top:341px;width:7px;height:9px;background:#fbfbfb;border:1px solid #e4e4e4"></div>
<div style="left:540px;top:456px;width:7px;height:8px;background:#fbfbfb;border:1px solid #e4e4e4"></div>
<svg style="position:absolute;left:0;top:0" width="548" height="477"><path d="M4 468.3L7 466.3V470.3Z" fill="#555"/><path d="M537 468.3L534 466.3V470.3Z" fill="#555"/><path d="M543.5 344.3L546 346.8H541Z" fill="#444"/><path d="M543.5 461L546 458.5H541Z" fill="#444"/></svg>
<div style="left:550px;top:117px;width:448px;height:356px;background:#efefef"></div>
<div style="left:550px;top:117px;width:447px;height:16px;background:#e6e5e2;border:1px solid #dcdcdc"></div>
<div class="t" style="left:554px;top:118.5px;height:15px;line-height:15px;font-weight:bold;color:#ff1c1c;font-size:9.2px">Path #1: Setup slack is -0.798 (VIOLATED)</div>
<div style="left:551px;top:135px;width:75px;height:17px;background:#e4e4e4;border:1px solid #d4d4d4;border-bottom:none"></div>
<div class="t" style="left:551px;top:135px;width:75px;text-align:center;height:17px;line-height:17px;">Path Summary</div>
<div style="left:626px;top:135px;width:53px;height:17px;background:#e4e4e4;border:1px solid #d4d4d4;border-bottom:none"></div>
<div class="t" style="left:626px;top:135px;width:53px;text-align:center;height:17px;line-height:17px;">Statistics</div>
<div style="left:679px;top:135px;width:55px;height:17px;background:#e4e4e4;border:1px solid #d4d4d4;border-bottom:none"></div>
<div class="t" style="left:679px;top:135px;width:55px;text-align:center;height:17px;line-height:17px;">Data Path</div>
<div style="left:734px;top:134px;width:58px;height:19px;background:#fafafa;border:1px solid #d4d4d4;border-bottom:none"></div>
<div class="t" style="left:734px;top:135px;width:58px;text-align:center;height:17px;line-height:17px;">Waveform</div>
<div style="left:551px;top:152px;width:446px;height:321px;background:#fff;border:1px solid #d0d0d0"></div>
<div style="left:552px;top:153px;width:444px;height:49px;background:#fafafa"></div>
<svg style="position:absolute;left:0;top:0" width="998" height="477" viewBox="0 0 998 477"><line x1="606.5" y1="202" x2="606.5" y2="331" stroke="#d2f7f9" stroke-width="1" /><line x1="620.5" y1="202" x2="620.5" y2="331" stroke="#d2f7f9" stroke-width="1" /><line x1="635.5" y1="202" x2="635.5" y2="331" stroke="#d2f7f9" stroke-width="1" /><line x1="649.5" y1="202" x2="649.5" y2="331" stroke="#d2f7f9" stroke-width="1" /><line x1="663.5" y1="202" x2="663.5" y2="331" stroke="#d2f7f9" stroke-width="1" /><line x1="677.5" y1="202" x2="677.5" y2="331" stroke="#d2f7f9" stroke-width="1" /><line x1="691.5" y1="202" x2="691.5" y2="331" stroke="#d2f7f9" stroke-width="1" /><line x1="705.5" y1="202" x2="705.5" y2="331" stroke="#d2f7f9" stroke-width="1" /><line x1="720.5" y1="202" x2="720.5" y2="331" stroke="#d2f7f9" stroke-width="1" /><line x1="734.5" y1="202" x2="734.5" y2="331" stroke="#d2f7f9" stroke-width="1" /><line x1="748.5" y1="202" x2="748.5" y2="331" stroke="#d2f7f9" stroke-width="1" /><line x1="762.5" y1="202" x2="762.5" y2="331" stroke="#d2f7f9" stroke-width="1" /><line x1="776.5" y1="202" x2="776.5" y2="331" stroke="#d2f7f9" stroke-width="1" /><line x1="790.5" y1="202" x2="790.5" y2="331" stroke="#d2f7f9" stroke-width="1" /><line x1="804.5" y1="202" x2="804.5" y2="331" stroke="#d2f7f9" stroke-width="1" /><line x1="819.5" y1="202" x2="819.5" y2="331" stroke="#d2f7f9" stroke-width="1" /><line x1="833.5" y1="202" x2="833.5" y2="331" stroke="#d2f7f9" stroke-width="1" /><line x1="847.5" y1="202" x2="847.5" y2="331" stroke="#d2f7f9" stroke-width="1" /><line x1="861.5" y1="202" x2="861.5" y2="331" stroke="#d2f7f9" stroke-width="1" /><line x1="875.5" y1="202" x2="875.5" y2="331" stroke="#d2f7f9" stroke-width="1" /><line x1="889.5" y1="202" x2="889.5" y2="331" stroke="#d2f7f9" stroke-width="1" /><line x1="903.5" y1="202" x2="903.5" y2="331" stroke="#d2f7f9" stroke-width="1" /><line x1="918.5" y1="202" x2="918.5" y2="331" stroke="#d2f7f9" stroke-width="1" /><line x1="932.5" y1="202" x2="932.5" y2="331" stroke="#d2f7f9" stroke-width="1" /><line x1="946.5" y1="202" x2="946.5" y2="331" stroke="#d2f7f9" stroke-width="1" /><line x1="960.5" y1="202" x2="960.5" y2="331" stroke="#d2f7f9" stroke-width="1" /><line x1="974.5" y1="202" x2="974.5" y2="331" stroke="#d2f7f9" stroke-width="1" /><line x1="988.5" y1="202" x2="988.5" y2="331" stroke="#d2f7f9" stroke-width="1" /><rect x="865" y="238.5" width="109" height="56.5" fill="#ffe6e6" stroke="#ffd8d8" stroke-width="0.6"/><rect x="865" y="286" width="17" height="45" fill="#ececec" opacity="0.6"/><text x="553" y="210.1" font-size="3.0" fill="#111" text-anchor="start" font-family="Liberation Mono"  stroke="#111" stroke-width="0.12">Launch Clock</text><text x="553" y="221.7" font-size="3.0" fill="#b8b8b8" text-anchor="start" font-family="Liberation Mono"  stroke="#b8b8b8" stroke-width="0.12">Setup Relationship</text><text x="553" y="233.4" font-size="3.0" fill="#111" text-anchor="start" font-family="Liberation Mono"  stroke="#111" stroke-width="0.12">Latch Clock</text><text x="553" y="245.1" font-size="3.0" fill="#111" text-anchor="start" font-family="Liberation Mono"  stroke="#111" stroke-width="0.12">Data Arrival</text><text x="553" y="256.7" font-size="3.0" fill="#b8b8b8" text-anchor="start" font-family="Liberation Mono"  stroke="#b8b8b8" stroke-width="0.12">Input Delay</text><text x="553" y="268.5" font-size="3.0" fill="#b8b8b8" text-anchor="start" font-family="Liberation Mono"  stroke="#b8b8b8" stroke-width="0.12">Data Delay</text><text x="553" y="280.0" font-size="3.0" fill="#f03030" text-anchor="start" font-family="Liberation Mono"  stroke="#f03030" stroke-width="0.12">Slack</text><text x="553" y="291.70000000000005" font-size="3.0" fill="#111" text-anchor="start" font-family="Liberation Mono"  stroke="#111" stroke-width="0.12">Data Required</text><text x="553" y="303.40000000000003" font-size="3.0" fill="#b8b8b8" text-anchor="start" font-family="Liberation Mono"  stroke="#b8b8b8" stroke-width="0.12">Clock Delay</text><text x="553" y="315.3" font-size="3.0" fill="#b8b8b8" text-anchor="start" font-family="Liberation Mono"  stroke="#b8b8b8" stroke-width="0.12">Clock Uncertainty</text><text x="553" y="326.90000000000003" font-size="3.0" fill="#b8b8b8" text-anchor="start" font-family="Liberation Mono"  stroke="#b8b8b8" stroke-width="0.12">uTsu</text><text x="553" y="334.70000000000005" font-size="3.0" fill="#111" text-anchor="start" font-family="Liberation Mono"  stroke="#111" stroke-width="0.12">Time (ns)</text><text x="606.3" y="335" font-size="2.75" fill="#000" text-anchor="middle" font-family="Liberation Mono"  stroke="#000" stroke-width="0.12">-0.001</text><text x="620.4" y="335" font-size="2.75" fill="#000" text-anchor="middle" font-family="Liberation Mono"  stroke="#000" stroke-width="0.12">0.103</text><text x="634.6" y="335" font-size="2.75" fill="#000" text-anchor="middle" font-family="Liberation Mono"  stroke="#000" stroke-width="0.12">0.207</text><text x="648.8" y="335" font-size="2.75" fill="#000" text-anchor="middle" font-family="Liberation Mono"  stroke="#000" stroke-width="0.12">0.311</text><text x="662.9" y="335" font-size="2.75" fill="#000" text-anchor="middle" font-family="Liberation Mono"  stroke="#000" stroke-width="0.12">0.415</text><text x="677.0" y="335" font-size="2.75" fill="#000" text-anchor="middle" font-family="Liberation Mono"  stroke="#000" stroke-width="0.12">0.519</text><text x="691.2" y="335" font-size="2.75" fill="#000" text-anchor="middle" font-family="Liberation Mono"  stroke="#000" stroke-width="0.12">0.623</text><text x="705.3" y="335" font-size="2.75" fill="#000" text-anchor="middle" font-family="Liberation Mono"  stroke="#000" stroke-width="0.12">0.728</text><text x="719.5" y="335" font-size="2.75" fill="#000" text-anchor="middle" font-family="Liberation Mono"  stroke="#000" stroke-width="0.12">0.832</text><text x="733.6" y="335" font-size="2.75" fill="#000" text-anchor="middle" font-family="Liberation Mono"  stroke="#000" stroke-width="0.12">0.936</text><text x="747.8" y="335" font-size="2.75" fill="#000" text-anchor="middle" font-family="Liberation Mono"  stroke="#000" stroke-width="0.12">1.04</text><text x="761.9" y="335" font-size="2.75" fill="#000" text-anchor="middle" font-family="Liberation Mono"  stroke="#000" stroke-width="0.12">1.144</text><text x="776.1" y="335" font-size="2.75" fill="#000" text-anchor="middle" font-family="Liberation Mono"  stroke="#000" stroke-width="0.12">1.248</text><text x="790.2" y="335" font-size="2.75" fill="#000" text-anchor="middle" font-family="Liberation Mono"  stroke="#000" stroke-width="0.12">1.353</text><text x="804.4" y="335" font-size="2.75" fill="#000" text-anchor="middle" font-family="Liberation Mono"  stroke="#000" stroke-width="0.12">1.457</text><text x="818.6" y="335" font-size="2.75" fill="#000" text-anchor="middle" font-family="Liberation Mono"  stroke="#000" stroke-width="0.12">1.561</text><text x="832.7" y="335" font-size="2.75" fill="#000" text-anchor="middle" font-family="Liberation Mono"  stroke="#000" stroke-width="0.12">1.665</text><text x="846.8" y="335" font-size="2.75" fill="#000" text-anchor="middle" font-family="Liberation Mono"  stroke="#000" stroke-width="0.12">1.769</text><text x="861.0" y="335" font-size="2.75" fill="#000" text-anchor="middle" font-family="Liberation Mono"  stroke="#000" stroke-width="0.12">1.873</text><text x="875.2" y="335" font-size="2.75" fill="#000" text-anchor="middle" font-family="Liberation Mono"  stroke="#000" stroke-width="0.12">1.977</text><text x="889.3" y="335" font-size="2.75" fill="#000" text-anchor="middle" font-family="Liberation Mono"  stroke="#000" stroke-width="0.12">2.082</text><text x="903.4" y="335" font-size="2.75" fill="#000" text-anchor="middle" font-family="Liberation Mono"  stroke="#000" stroke-width="0.12">2.186</text><text x="917.6" y="335" font-size="2.75" fill="#000" text-anchor="middle" font-family="Liberation Mono"  stroke="#000" stroke-width="0.12">2.29</text><text x="931.8" y="335" font-size="2.75" fill="#000" text-anchor="middle" font-family="Liberation Mono"  stroke="#000" stroke-width="0.12">2.394</text><text x="945.9" y="335" font-size="2.75" fill="#000" text-anchor="middle" font-family="Liberation Mono"  stroke="#000" stroke-width="0.12">2.498</text><text x="960.0" y="335" font-size="2.75" fill="#000" text-anchor="middle" font-family="Liberation Mono"  stroke="#000" stroke-width="0.12">2.602</text><text x="974.2" y="335" font-size="2.75" fill="#000" text-anchor="middle" font-family="Liberation Mono"  stroke="#000" stroke-width="0.12">2.707</text><text x="988.4" y="335" font-size="2.75" fill="#000" text-anchor="middle" font-family="Liberation Mono"  stroke="#000" stroke-width="0.12">2.811</text><line x1="586" y1="213.5" x2="606" y2="213.5" stroke="#a8a8a8" stroke-width="1" /><line x1="606" y1="204.5" x2="833" y2="204.5" stroke="#999" stroke-width="1" /><line x1="834" y1="213.5" x2="995" y2="213.5" stroke="#aaa" stroke-width="1" /><line x1="606.5" y1="204" x2="606.5" y2="213.5" stroke="#000" stroke-width="1.3" /><text x="604" y="207.8" font-size="2.9" fill="#000" text-anchor="end" font-family="Liberation Mono" font-weight="bold" stroke="#000" stroke-width="0.12">Launch</text><line x1="606" y1="221.5" x2="833" y2="221.5" stroke="#dcdcdc" stroke-width="1" /><text x="719" y="220.3" font-size="2.9" fill="#b8b8b8" text-anchor="middle" font-family="Liberation Mono"  stroke="#b8b8b8" stroke-width="0.12">1.666 ns</text><line x1="586" y1="227.5" x2="606" y2="227.5" stroke="#999" stroke-width="1" /><line x1="606.5" y1="227" x2="606.5" y2="237" stroke="#999" stroke-width="1" /><line x1="606" y1="236.5" x2="833" y2="236.5" stroke="#999" stroke-width="1" /><line x1="834" y1="227.5" x2="995" y2="227.5" stroke="#aaa" stroke-width="1" /><line x1="833.5" y1="227" x2="833.5" y2="237" stroke="#101040" stroke-width="1.6" /><text x="831" y="232.3" font-size="2.9" fill="#000" text-anchor="end" font-family="Liberation Mono" font-weight="bold" stroke="#000" stroke-width="0.12">Latch</text><line x1="586" y1="239.5" x2="971" y2="239.5" stroke="#a8a8a8" stroke-width="1" /><line x1="586" y1="248.5" x2="971" y2="248.5" stroke="#a8a8a8" stroke-width="1" /><line x1="978" y1="239.5" x2="995" y2="239.5" stroke="#a8a8a8" stroke-width="1" /><line x1="978" y1="248.5" x2="995" y2="248.5" stroke="#a8a8a8" stroke-width="1" /><path d="M971 239.5 C973.5 239.5 973.5 244 974.5 244 C975.5 244 975.5 239.5 978 239.5 M971 248.5 C973.5 248.5 973.5 244 974.5 244 C975.5 244 975.5 248.5 978 248.5" stroke="#a8a8a8" fill="none" stroke-width="1"/><line x1="606" y1="256.5" x2="778" y2="256.5" stroke="#d4d4d4" stroke-width="1" stroke-dasharray="1 1"/><line x1="778.5" y1="248" x2="778.5" y2="272" stroke="#eaeaea" stroke-width="1" /><circle cx="778" cy="256.5" r="0.7" fill="#bbb"/><text x="692" y="255" font-size="2.9" fill="#b8b8b8" text-anchor="middle" font-family="Liberation Mono"  stroke="#b8b8b8" stroke-width="0.12">1.266 ns</text><line x1="778" y1="268.5" x2="974" y2="268.5" stroke="#d4d4d4" stroke-width="1" stroke-dasharray="1 1"/><text x="876" y="266.5" font-size="2.9" fill="#b8b8b8" text-anchor="middle" font-family="Liberation Mono"  stroke="#b8b8b8" stroke-width="0.12">1.437 ns</text><line x1="865" y1="279.5" x2="974" y2="279.5" stroke="#f04040" stroke-width="1" /><circle cx="974" cy="279.5" r="1" fill="#e02020"/><text x="919" y="278" font-size="2.9" fill="#f03030" text-anchor="middle" font-family="Liberation Mono" font-weight="bold" stroke="#f03030" stroke-width="0.12">-0.798 ns</text><line x1="586" y1="286.5" x2="862" y2="286.5" stroke="#a8a8a8" stroke-width="1" /><line x1="586" y1="294.5" x2="862" y2="294.5" stroke="#a8a8a8" stroke-width="1" /><line x1="868" y1="286.5" x2="995" y2="286.5" stroke="#a8a8a8" stroke-width="1" /><line x1="868" y1="294.5" x2="995" y2="294.5" stroke="#a8a8a8" stroke-width="1" /><path d="M861.5 286.5 C864 286.5 864 290.5 865 290.5 C866 290.5 866 286.5 868.5 286.5 M861.5 294.5 C864 294.5 864 290.5 865 290.5 C866 290.5 866 294.5 868.5 294.5" stroke="#a8a8a8" fill="none" stroke-width="1"/><line x1="833" y1="303.5" x2="906" y2="303.5" stroke="#d4d4d4" stroke-width="1" stroke-dasharray="1 1"/><circle cx="906" cy="303.5" r="0.8" fill="#aaa"/><text x="869" y="301.5" font-size="2.9" fill="#b8b8b8" text-anchor="middle" font-family="Liberation Mono"  stroke="#b8b8b8" stroke-width="0.12">0.541 ns</text><line x1="906.5" y1="286" x2="906.5" y2="304" stroke="#ececec" stroke-width="1" /><line x1="882" y1="314.5" x2="906" y2="314.5" stroke="#d4d4d4" stroke-width="1" stroke-dasharray="1 1"/><circle cx="882" cy="314.5" r="0.8" fill="#aaa"/><text x="894" y="313" font-size="2.9" fill="#b8b8b8" text-anchor="middle" font-family="Liberation Mono"  stroke="#b8b8b8" stroke-width="0.12">-0.05 ns</text><line x1="866" y1="326.5" x2="882" y2="326.5" stroke="#d4d4d4" stroke-width="1" stroke-dasharray="1 1"/><circle cx="866" cy="326.5" r="0.8" fill="#aaa"/><text x="874" y="325" font-size="2.9" fill="#b8b8b8" text-anchor="middle" font-family="Liberation Mono"  stroke="#b8b8b8" stroke-width="0.12">0.122 ns</text><line x1="833.5" y1="201" x2="833.5" y2="331" stroke="#a8a8ff" stroke-width="1" /><line x1="833.5" y1="227" x2="833.5" y2="237" stroke="#101040" stroke-width="1.6" /><circle cx="833.5" cy="201.5" r="0.9" fill="#8080ff"/><text x="833" y="199" font-size="9.6" fill="#1a1a1a" text-anchor="middle" font-family="Liberation Sans" stroke="#1a1a1a" stroke-width="0.15">1.666 ns</text></svg></div></body></html>
